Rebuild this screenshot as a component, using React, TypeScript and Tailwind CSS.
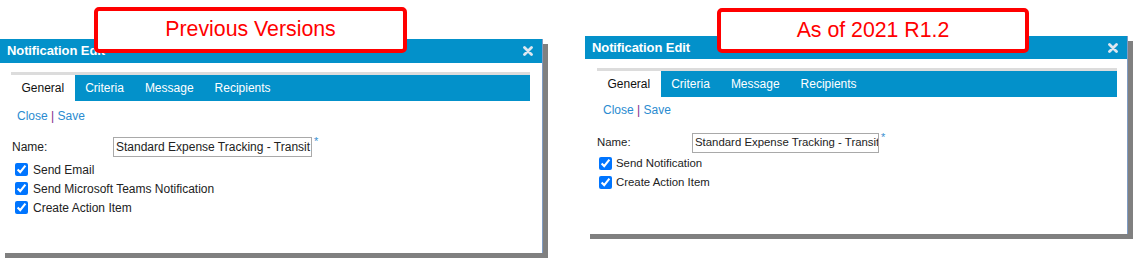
const TABS = ['General', 'Criteria', 'Message', 'Recipients']

function CloseIcon() {
  return (
    <svg width="10" height="10" viewBox="0 0 10 10" className="block">
      <path d="M1.5 1.5 L8.5 8.5 M8.5 1.5 L1.5 8.5" stroke="#dde7f0" strokeWidth="2.8" strokeLinecap="round" />
    </svg>
  )
}

type PanelProps = {
  titleH: string
  tabWrap: string
  linksTop: string
  nameTop: string
  labelW: string
  inputW: string
  textSize: string
  boxGap: string
  boxOffset: string
  rowsTop: string
  bodyH: string
  options: string[]
}

function Panel(p: PanelProps) {
  return (
    <div className="relative w-[543px] bg-white shadow-[5px_5px_0_#808080] border-r border-[#7f9cc4]">
      <div className={`${p.titleH} flex items-center justify-between bg-[#0391ca] pl-[7px] pr-[9px]`}>
        <span className="text-[13px] font-bold text-white tracking-[-0.1px]">Notification Edit</span>
        <CloseIcon />
      </div>
      {/* flex-col keeps the first margin inside the body */}
      <div className={`flex flex-col ${p.bodyH} ${p.tabWrap}`}>
        <div className="mt-[9px] border-t-[3px] border-[#dcdcdc]">
          <div className="flex h-[26px] bg-[#0391ca] text-[12px]">
            {TABS.map((t, i) => (
              <div
                key={t}
                className={`flex items-center px-[10.5px] ${i === 0 ? 'bg-white text-[#111]' : 'text-white'}`}
              >
                {t}
              </div>
            ))}
          </div>
        </div>

        <div className={`${p.linksTop} pl-[6px] text-[12px] leading-[14px] text-[#2a8bd0]`}>
          Close <span className="text-[#7d2b8b]">|</span> Save
        </div>

        <div className={`${p.nameTop} flex items-start ${p.textSize} text-[#222]`}>
          <div className={`${p.labelW} h-[20px] flex items-center`}>Name:</div>
          <div className={`${p.inputW} h-[20px] border border-[#a9a9a9] px-[2px] flex items-center overflow-hidden whitespace-nowrap`}>
            Standard Expense Tracking - Transit
          </div>
          <span className="ml-[2px] -mt-[2px] text-[11px] leading-[12px] text-[#3a8fd0]">*</span>
        </div>

        <div className={`${p.rowsTop} flex flex-col ${p.textSize} text-[#222]`}>
          {p.options.map((o) => (
            <label key={o} className={`flex h-[19px] items-center ${p.boxGap}`}>
              <input type="checkbox" checked readOnly className={`${p.boxOffset} m-0 h-[13px] w-[13px] accent-[#0075ff]`} />
              {o}
            </label>
          ))}
        </div>
      </div>
    </div>
  )
}

function Callout({ text, className }: { text: string; className: string }) {
  return (
    <div
      className={`absolute flex items-center justify-center rounded-[5px] border-4 border-[#ff0000] bg-white text-[21.3px] text-[#ff0000] ${className}`}
    >
      {text}
    </div>
  )
}

export default function App() {
  return (
    <div className="relative flex h-[259px] w-[1137px] items-start overflow-hidden bg-white font-['Liberation_Sans',Arial,sans-serif]">
      <div className="pt-[39px]">
        <Panel
          titleH="h-[24px]"
          tabWrap="pl-[11px] pr-[12px]"
          linksTop="mt-[8px]"
          nameTop="mt-[14px] pl-[1px]"
          labelW="w-[101px]"
          inputW="w-[199px]"
          textSize="text-[12px]"
          boxGap="gap-[5px]"
          boxOffset="ml-[4px]"
          rowsTop="mt-[3px]"
          bodyH="h-[190px]"
          options={['Send Email', 'Send Microsoft Teams Notification', 'Create Action Item']}
        />
      </div>
      <div className="ml-[42px] pt-[36px]">
        <Panel
          titleH="h-[23px]"
          tabWrap="pl-[12px] pr-[10px]"
          linksTop="mt-[6px]"
          nameTop="mt-[16px]"
          labelW="w-[95px]"
          inputW="w-[187px]"
          textSize="text-[11.4px]"
          boxGap="gap-[4px]"
          boxOffset="ml-[2px]"
          rowsTop="mt-[1px]"
          bodyH="h-[175px]"
          options={['Send Notification', 'Create Action Item']}
        />
      </div>

      <Callout text="Previous Versions" className="left-[94px] top-[7px] h-[46px] w-[313px]" />
      <Callout text="As of 2021 R1.2" className="left-[717px] top-[8px] h-[45px] w-[312px]" />
    </div>
  )
}
